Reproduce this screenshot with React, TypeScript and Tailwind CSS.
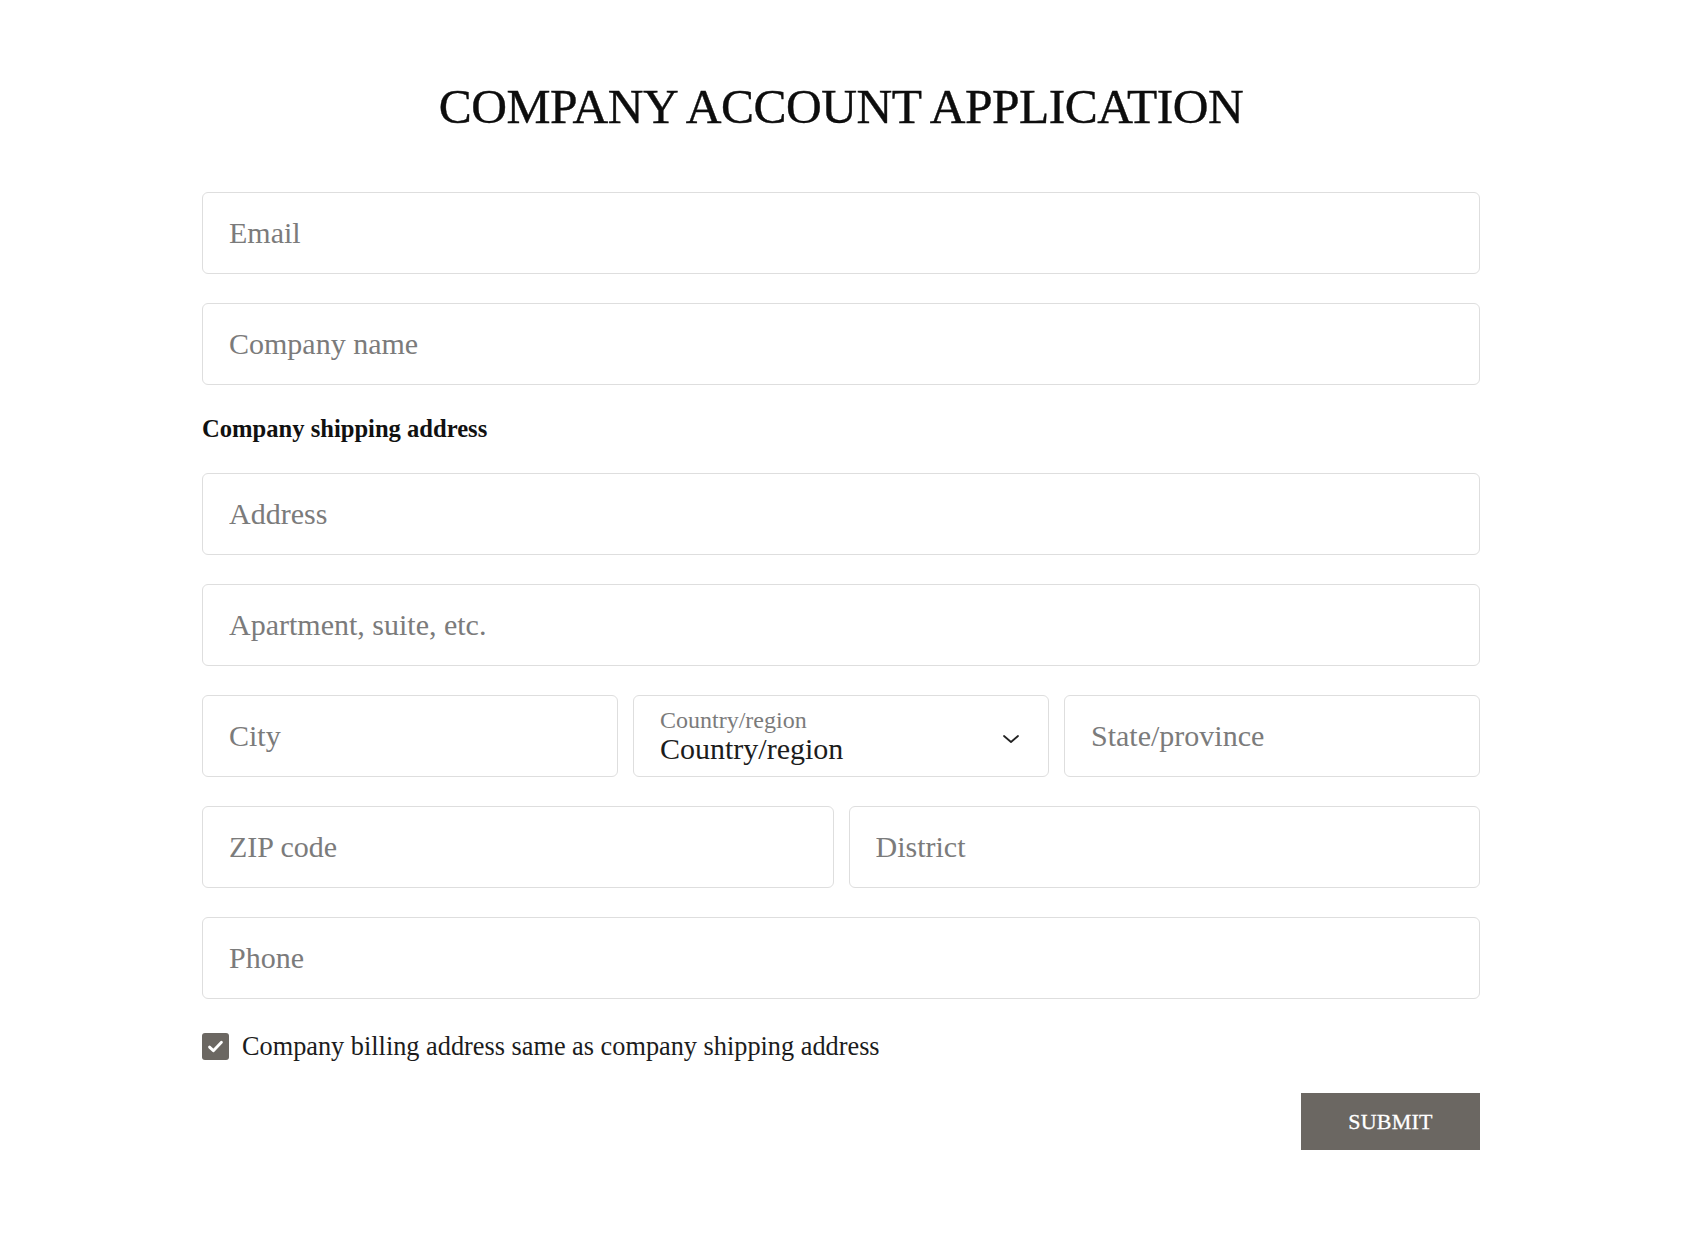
import { useState } from 'react';

const inputClass =
  'h-[82px] w-full rounded-[6px] border border-[#dedede] bg-white px-[26px] text-[30px] text-[#222] placeholder:text-[#7b7b7b] outline-none';

function Field({ placeholder }: { placeholder: string }) {
  return <input type="text" placeholder={placeholder} className={inputClass} />;
}

function CountrySelect() {
  return (
    <div className="relative flex h-[82px] w-full flex-col justify-center rounded-[6px] border border-[#dedede] bg-white px-[26px]">
      <span className="text-[24px] leading-[26px] text-[#7b7b7b]">Country/region</span>
      <span className="text-[30px] leading-[32px] text-[#1c1c1c]">Country/region</span>
      <svg
        className="absolute right-[28px] top-[37px] h-[12px] w-[18px] text-[#222]"
        viewBox="0 0 18 12"
        fill="none"
        stroke="currentColor"
        strokeWidth={1.8}
        strokeLinecap="round"
        strokeLinejoin="round"
      >
        <path d="M2 3l7 6 7-6" />
      </svg>
    </div>
  );
}

export default function App() {
  const [sameAddress, setSameAddress] = useState(true);

  return (
    <div className="min-h-screen bg-white font-['Liberation_Serif',serif]">
      <div className="pl-[202px] pt-[77px]">
        <div className="w-[1278px]">
          <h1 className="text-center text-[49.5px] leading-[60px] tracking-[-0.5px] text-[#0d0d0d] [-webkit-text-stroke:0.4px_#0d0d0d]">
            COMPANY ACCOUNT APPLICATION
          </h1>

          <form className="mt-[55px] flex flex-col" onSubmit={(e) => e.preventDefault()}>
            <Field placeholder="Email" />
            <div className="mt-[29px]">
              <Field placeholder="Company name" />
            </div>

            <p className="mt-[29px] text-[24.6px] font-bold leading-[30px] text-[#111]">
              Company shipping address
            </p>

            <div className="mt-[29px]">
              <Field placeholder="Address" />
            </div>
            <div className="mt-[29px]">
              <Field placeholder="Apartment, suite, etc." />
            </div>

            <div className="mt-[29px] grid grid-cols-3 gap-[15px]">
              <Field placeholder="City" />
              <CountrySelect />
              <Field placeholder="State/province" />
            </div>

            <div className="mt-[29px] grid grid-cols-2 gap-[15px]">
              <Field placeholder="ZIP code" />
              <Field placeholder="District" />
            </div>

            <div className="mt-[29px]">
              <Field placeholder="Phone" />
            </div>

            {/* Billing checkbox */}
            <label className="mt-[34px] flex h-[27px] cursor-pointer items-center gap-[13px]">
              <button
                type="button"
                onClick={() => setSameAddress(!sameAddress)}
                className={`flex h-[27px] w-[27px] items-center justify-center rounded-[3px] ${
                  sameAddress ? 'bg-[#6b6762]' : 'border border-[#999] bg-white'
                }`}
              >
                {sameAddress && (
                  <svg className="h-[19px] w-[19px]" viewBox="0 0 16 16" fill="none" stroke="white" strokeWidth={2.4} strokeLinecap="round" strokeLinejoin="round">
                    <path d="M3 8.5l3.2 3L13 4.5" />
                  </svg>
                )}
              </button>
              <span className="text-[26.3px] leading-[30px] text-[#1c1c1c]">
                Company billing address same as company shipping address
              </span>
            </label>

            <button
              type="submit"
              className="mt-[33px] h-[57px] w-[179px] self-end bg-[#6b6762] text-[22px] tracking-[0.2px] text-white [-webkit-text-stroke:0.3px_white]"
            >
              SUBMIT
            </button>
          </form>
        </div>
      </div>
    </div>
  );
}
